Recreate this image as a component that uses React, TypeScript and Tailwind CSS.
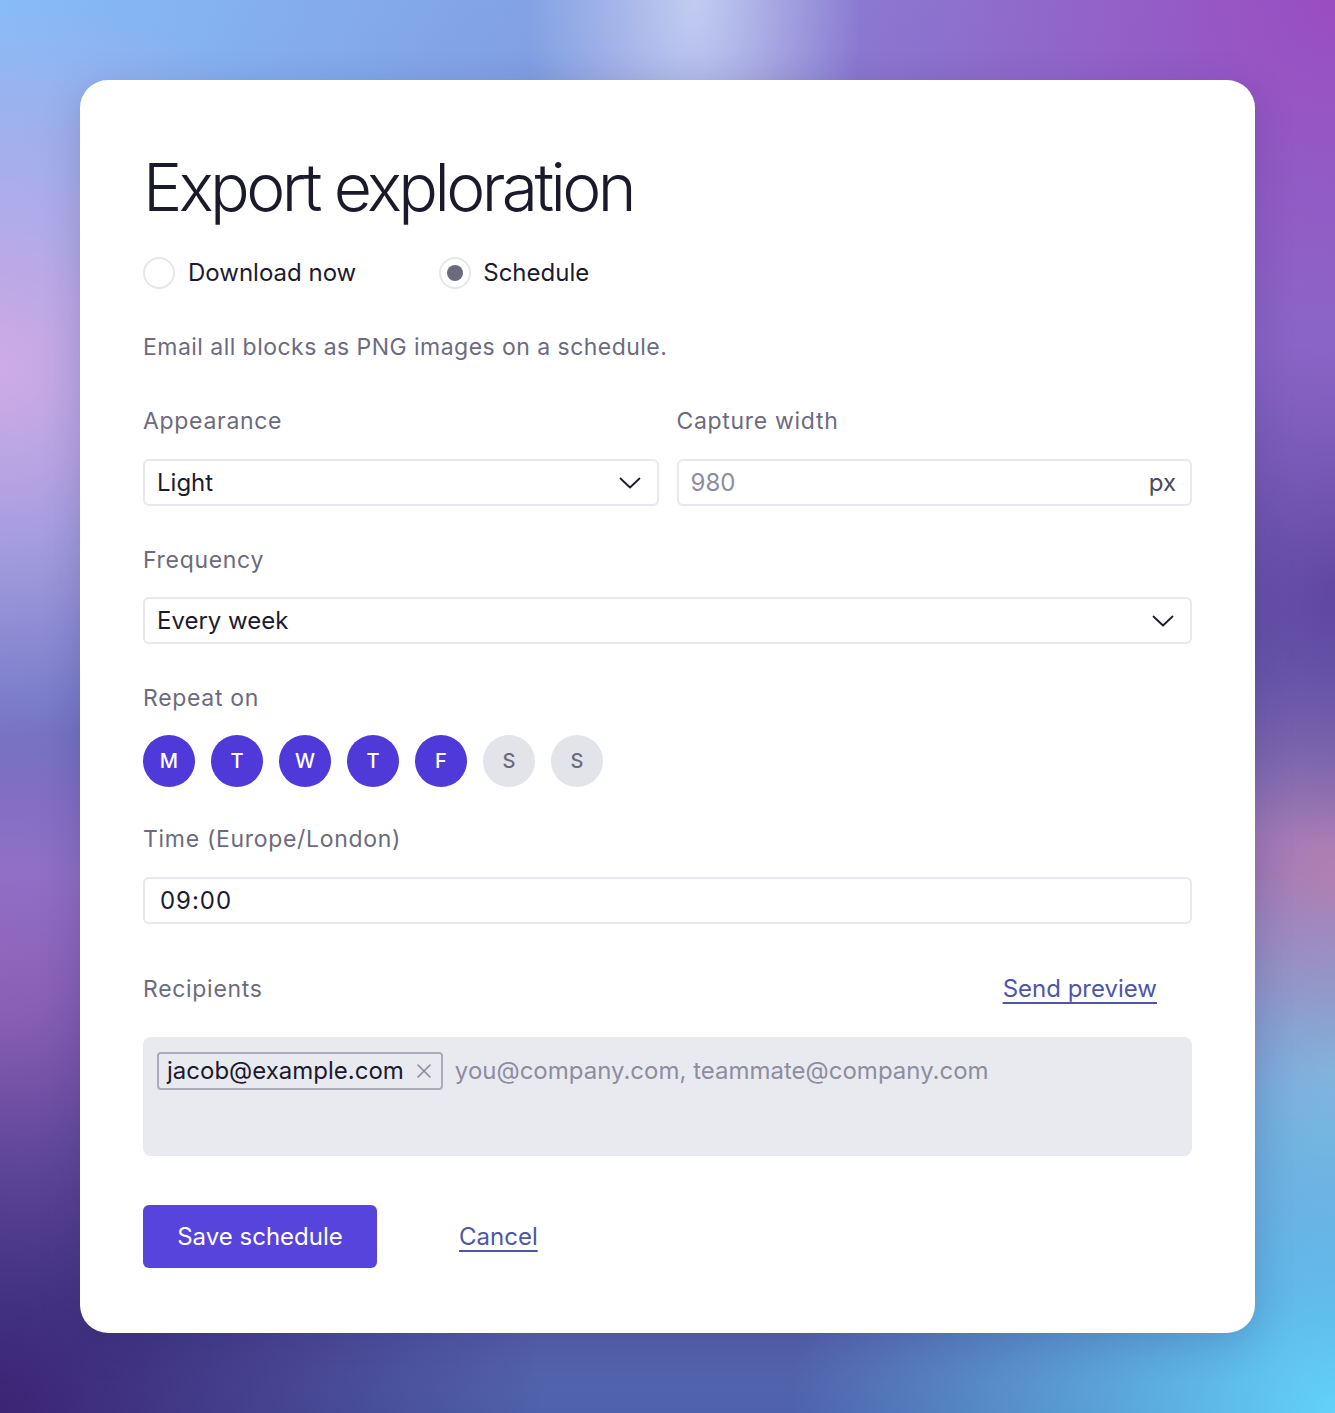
import React, { useState } from "react";

const days = ["M", "T", "W", "T", "F", "S", "S"];

const Chevron: React.FC = () => (
  <svg width="22" height="12" viewBox="0 0 22 12" fill="none" className="shrink-0">
    <path d="M1.5 1.5 L11 10.5 L20.5 1.5" stroke="#1c1b2e" strokeWidth="1.8" strokeLinecap="round" strokeLinejoin="round" />
  </svg>
);

const Label: React.FC<{ children: React.ReactNode }> = ({ children }) => (
  <div className="h-8 flex items-center text-[23px] tracking-[0.03em] text-[#6c6b7d]">{children}</div>
);

const App: React.FC = () => {
  const [mode, setMode] = useState<"now" | "schedule">("schedule");
  const [active, setActive] = useState<boolean[]>([true, true, true, true, true, false, false]);

  return (
    <div className="min-h-[1413px] p-[80px] font-['Inter',sans-serif] bg-[radial-gradient(ellipse_at_52%_0%,rgba(205,215,245,0.85)_0,rgba(205,215,245,0)_17%),radial-gradient(circle_at_100%_100%,#62d2fa_0,rgba(98,210,250,0)_28%),radial-gradient(circle_at_0%_100%,#3b2474_0,rgba(59,36,116,0)_28%),radial-gradient(circle_at_0%_26%,#cfaae6_0,rgba(207,170,230,0)_22%),radial-gradient(circle_at_0%_72%,#a674cc_0,rgba(166,116,204,0)_18%),radial-gradient(circle_at_0%_0%,#86bcf7_0,rgba(134,188,247,0)_40%),radial-gradient(circle_at_100%_0%,#9a4cc0_0,rgba(154,76,192,0)_40%),radial-gradient(circle_at_100%_42%,#4f4596_0,rgba(79,69,150,0)_16%),radial-gradient(circle_at_100%_62%,#b27fb2_0,rgba(178,127,178,0)_16%),radial-gradient(circle_at_100%_76%,#8eaad0_0,rgba(142,170,208,0)_14%),linear-gradient(180deg,#8196dc_0%,#6d72c2_45%,#7f68bd_70%,#4e62ab_100%)]">
      <div className="bg-white rounded-[28px] shadow-[0_10px_40px_rgba(30,20,80,0.18)] px-[63px] pt-[64px] pb-[65px]">
        <h1 className="h-[86px] flex items-center text-[66px] font-light tracking-[-0.055em] text-[#1a1a2b] leading-none">
          Export exploration
        </h1>

        <div className="mt-[27px] flex items-center gap-[83px] h-8">
          <button className="flex items-center gap-[13px]" onClick={() => setMode("now")}>
            <span className="w-8 h-8 rounded-full border-2 border-[#e6e6ec] flex items-center justify-center">
              {mode === "now" && <span className="w-4 h-4 rounded-full bg-[#6b6a7e]" />}
            </span>
            <span className="text-[24px] text-[#1c1b2e]">Download now</span>
          </button>
          <button className="flex items-center gap-[12px]" onClick={() => setMode("schedule")}>
            <span className="w-8 h-8 rounded-full border-2 border-[#e6e6ec] flex items-center justify-center">
              {mode === "schedule" && <span className="w-4 h-4 rounded-full bg-[#6b6a7e]" />}
            </span>
            <span className="text-[24px] text-[#1c1b2e]">Schedule</span>
          </button>
        </div>

        <p className="mt-[42px] h-8 flex items-center text-[23px] tracking-[0.02em] text-[#6c6b7d]">
          Email all blocks as PNG images on a schedule.
        </p>

        <div className="mt-[42px] grid grid-cols-2 gap-x-[18px]">
          <div>
            <Label>Appearance</Label>
            <div className="mt-[22px] h-[47px] rounded-[6px] border-2 border-[#e8e8ee] pl-[12px] pr-[16px] flex items-center justify-between">
              <span className="text-[24px] text-[#1c1b2e]">Light</span>
              <Chevron />
            </div>
          </div>
          <div>
            <Label>Capture width</Label>
            <div className="mt-[22px] h-[47px] rounded-[6px] border-2 border-[#e8e8ee] pl-[12px] pr-[14px] flex items-center justify-between">
              <span className="text-[24px] text-[#8e8d9e]">980</span>
              <span className="text-[24px] text-[#4a4a5c]">px</span>
            </div>
          </div>
        </div>

        <div className="mt-[38px]">
          <Label>Frequency</Label>
          <div className="mt-[21px] h-[47px] rounded-[6px] border-2 border-[#e8e8ee] pl-[12px] pr-[16px] flex items-center justify-between">
            <span className="text-[24px] text-[#1c1b2e]">Every week</span>
            <Chevron />
          </div>
        </div>

        <div className="mt-[38px]">
          <Label>Repeat on</Label>
          <div className="mt-[21px] flex gap-4">
            {days.map((d, i) => (
              <button
                key={i}
                onClick={() => setActive((prev) => prev.map((v, j) => (j === i ? !v : v)))}
                className={
                  active[i]
                    ? "w-[52px] h-[52px] rounded-full bg-[#5039d9] text-white text-[20px] font-medium flex items-center justify-center"
                    : "w-[52px] h-[52px] rounded-full bg-[#e3e4ea] text-[#6c6b7d] text-[20px] font-medium flex items-center justify-center"
                }
              >
                {d}
              </button>
            ))}
          </div>
        </div>

        <div className="mt-[36px]">
          <Label>Time (Europe/London)</Label>
          <div className="mt-[22px] h-[47px] rounded-[6px] border-2 border-[#e8e8ee] pl-[15px] flex items-center">
            <span className="text-[24px] text-[#1c1b2e] tracking-[0.04em]">09:00</span>
          </div>
        </div>

        <div className="mt-[47px] flex items-center justify-between pr-[35px]">
          <Label>Recipients</Label>
          <a href="#" className="text-[24px] text-[#4f56a6] underline underline-offset-[5px] decoration-[2px]">
            Send preview
          </a>
        </div>

        <div className="mt-[30px] h-[119px] rounded-[8px] bg-[#e9eaf0] pl-[14px] pt-[15px]">
          <div className="flex items-center gap-[12px]">
            <span className="h-[38px] rounded-[4px] border-2 border-[#abacba] pl-[8px] pr-[9px] flex items-center gap-[12px]">
              <span className="text-[24px] text-[#1c1b2e]">jacob@example.com</span>
              <svg width="16" height="16" viewBox="0 0 16 16" fill="none">
                <path d="M2 2 L14 14 M14 2 L2 14" stroke="#8b8a9b" strokeWidth="1.6" strokeLinecap="round" />
              </svg>
            </span>
            <span className="text-[24px] text-[#8e8d9e]">you@company.com, teammate@company.com</span>
          </div>
        </div>

        <div className="mt-[49px] flex items-center gap-[82px]">
          <button className="w-[234px] h-[63px] rounded-[6px] bg-[#5644dd] text-white text-[24px]">
            Save schedule
          </button>
          <a href="#" className="text-[24px] text-[#4f56a6] underline underline-offset-[5px] decoration-[2px]">
            Cancel
          </a>
        </div>
      </div>
    </div>
  );
};

export default App;
